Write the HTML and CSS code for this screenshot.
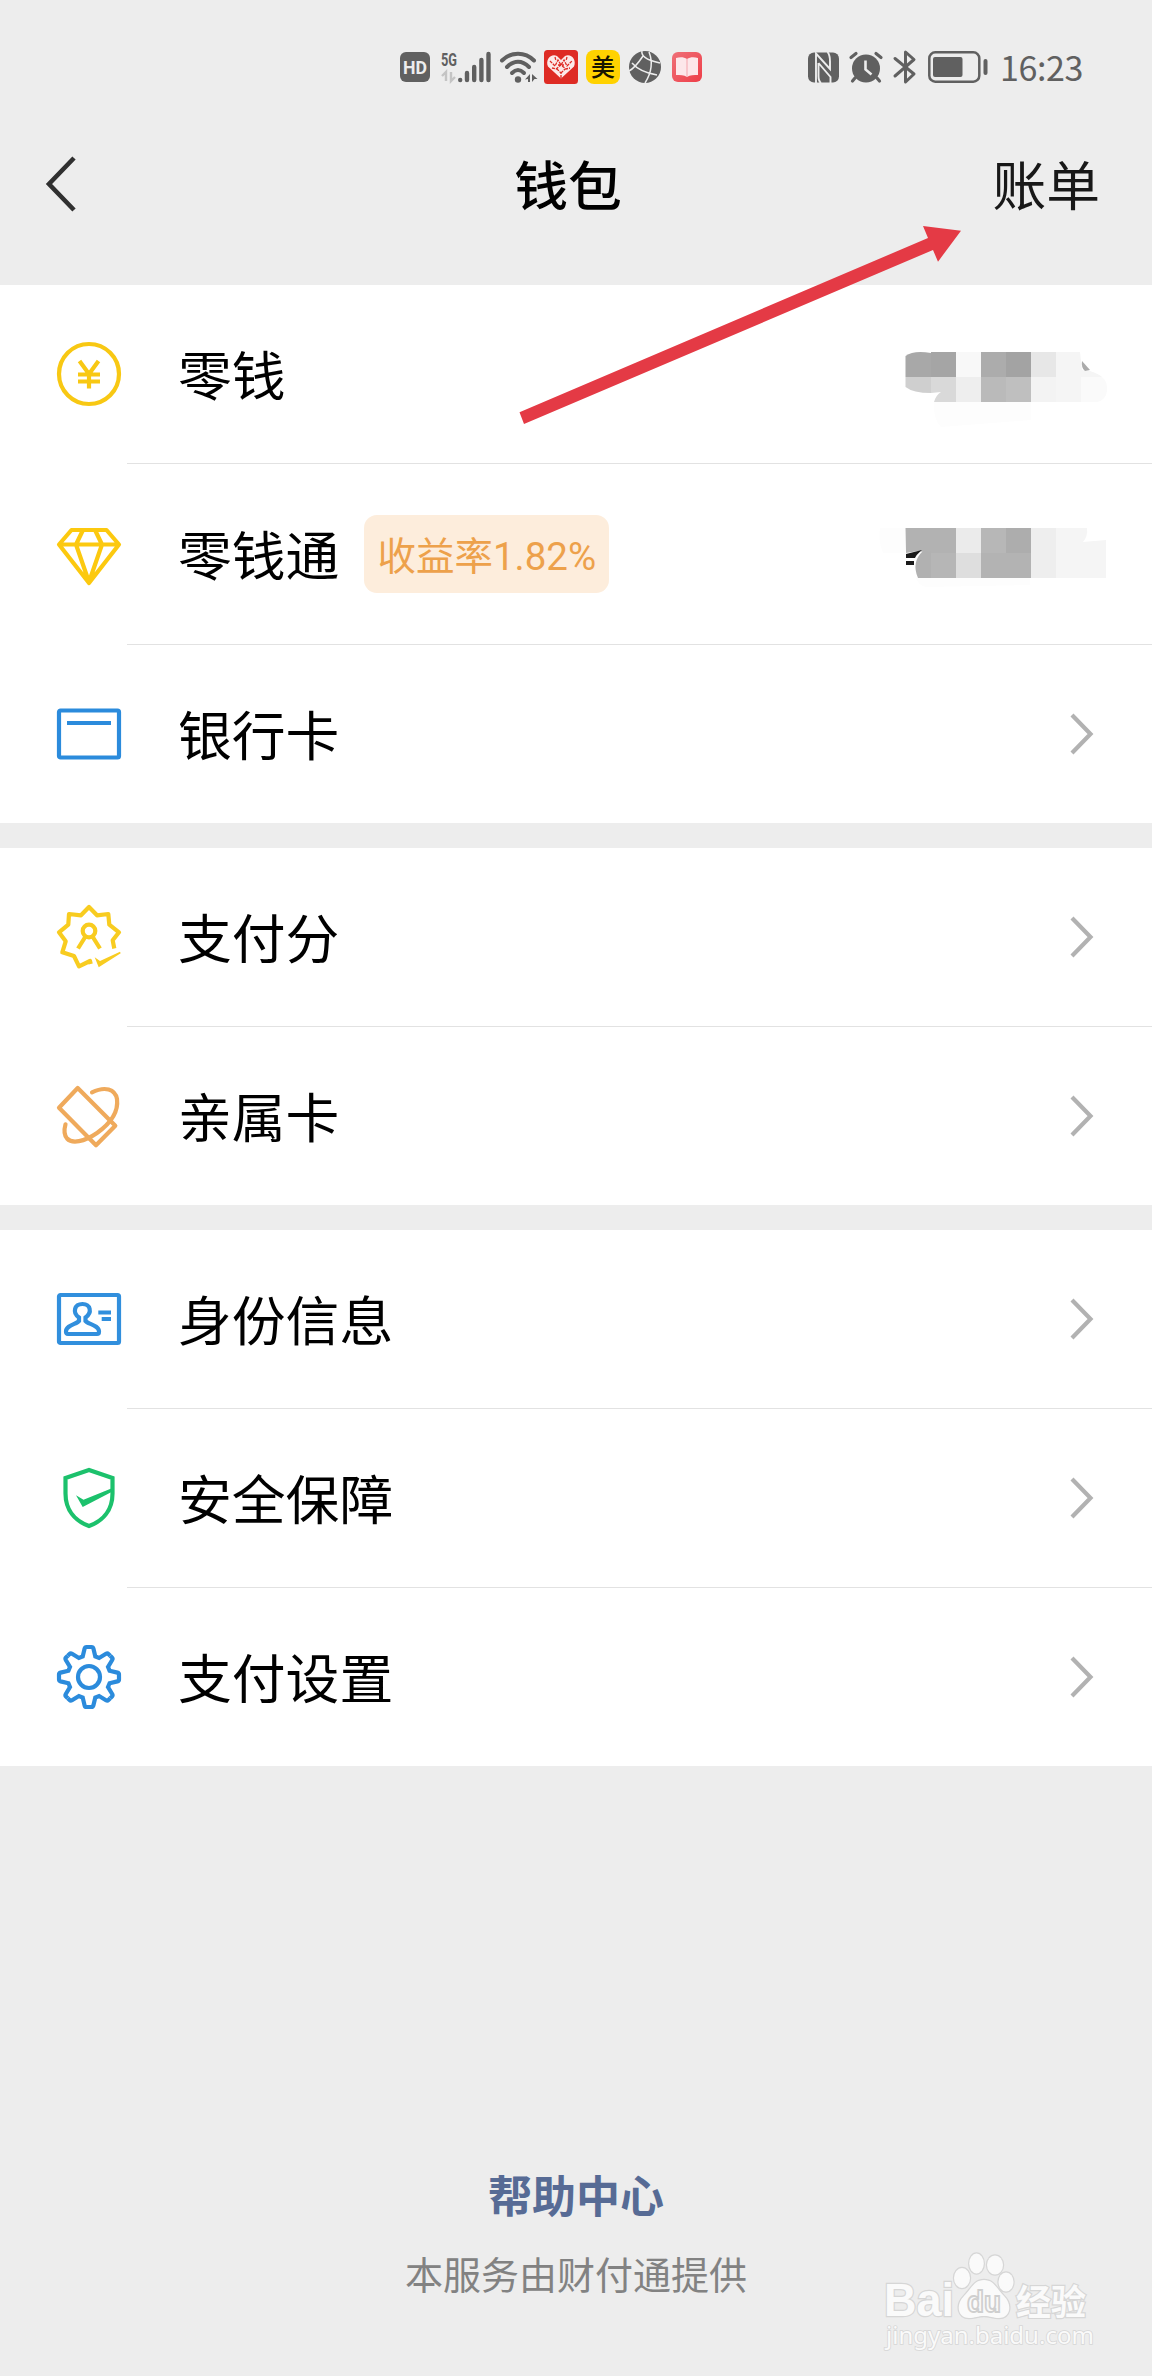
FILE: index.html
```html
<!DOCTYPE html>
<html lang="zh-CN">
<head>
    <meta charset="UTF-8">
    <meta name="viewport" content="width=device-width, initial-scale=1.0">
    <title>钱包</title>
    <link rel="stylesheet" href="styles.css">
</head>
<body>
    <div class="status-bar">
        <div class="status-left">
            <svg width="30" height="30" viewBox="0 0 30 30">
                <rect width="30" height="30" rx="6" fill="#606060"/>
                <text class="st-bold" x="3" y="22" font-size="19" textLength="24" lengthAdjust="spacingAndGlyphs" fill="#ededed">HD</text>
            </svg>
            <svg class="signal" width="50" height="32" viewBox="0 0 50 32">
                <text class="st-bold" x="0" y="14.500" font-size="18.500" textLength="16" lengthAdjust="spacingAndGlyphs" fill="#606060">5G</text>
                <path d="M5 30V21L1 25M10 21v9l4-4" fill="none" stroke="#c4c4c4" stroke-width="2.4"/>
                <path d="M19.2 29v0M26 22v7M33.2 16v13M40.4 9v20M47.5 3v26" stroke="#606060" stroke-width="4.400" stroke-linecap="round"/>
            </svg>
            <svg class="wifi" width="38" height="32" viewBox="0 0 38 32">
                <g fill="none" stroke="#606060" stroke-width="4" stroke-linecap="round">
                    <path d="M2 9.500C11 .5 25 .5 34 9.500"/>
                    <path d="M7 16C14 9 22 9 29 16"/>
                    <path d="M12 22c4-4 8-4 12 0"/>
                </g>
                <circle cx="18" cy="28.500" r="3.200" fill="#606060"/>
                <path d="M25 28.500l5-5.500v8h-2v-3zM32 31v-8l5.500 5h-3z" fill="#606060"/>
            </svg>
            <svg class="app" width="34" height="34" viewBox="0 0 34 34">
                <rect width="34" height="34" rx="3.500" fill="#de2b24"/>
                <path d="M17 28.500L4 16.500C1 10 7 3 13 6l4 4 4-4c6-3 12 4 9 10.500z" fill="#fff" fill-opacity=".9"/>
                <path d="M6 11l5 5 3-6 3 5 3-5 3 6 5-5M8 18l4 1 5-4 5 4 4-1M17 28v-5l-4-4M17 23l4-4M11 7l1 4M23 7l-1 4M14 15h6" fill="none" stroke="#de2b24" stroke-width="1.300" stroke-dasharray="3 1"/>
            </svg>
            <svg class="app" width="34" height="34" viewBox="0 0 34 34">
                <rect width="34" height="34" rx="8" fill="#ffd200"/>
                <text class="cjk-medium" x="17" y="25.500" font-size="24" text-anchor="middle" fill="#191500">美</text>
            </svg>
            <svg class="globe" width="32" height="32" viewBox="0 0 32 32">
                <circle cx="16" cy="16" r="16" fill="#606060"/>
                <path d="M13 0c-1 4 3 9 18 12M14 5C10 11 6 17 0 20M3 12c6 7 13 10 25 12M20 1c4 10 3 20-4 31" fill="none" stroke="#ededed" stroke-width="1.500"/>
            </svg>
            <svg class="book" width="30" height="30" viewBox="0 0 30 30">
                <defs>
                    <linearGradient id="bookBg" x1="0" y1="0" x2="1" y2="1">
                        <stop offset="0" stop-color="#ef7078"/>
                        <stop offset="1" stop-color="#ee3e48"/>
                    </linearGradient>
                </defs>
                <rect width="30" height="30" rx="6" fill="url(#bookBg)"/>
                <path d="M4 6c4-1 8-1 11 1 3-2 7-2 11-1v17c-4 0-8 0-11 2-3-2-7-2-11-2z" fill="#fde7ea"/>
                <path d="M15 7v18" stroke="#f4a5ad"/>
            </svg>
        </div>
        <div class="status-right">
            <svg width="31" height="31" viewBox="0 0 31 31">
                <rect width="31" height="30" y=".5" rx="6" fill="#606060"/>
                <path d="M8 31V1.500L22 17V9.500Q22 3 19.500 0M10.500 11L22.500 25v6M10.500 11V24q0 5 2.500 7" fill="none" stroke="#ededed" stroke-width="1.900"/>
            </svg>
            <svg class="alarm" width="34" height="31" viewBox="0 0 34 31">
                <circle cx="17" cy="16.500" r="14" fill="#606060"/>
                <path d="M2 5.500l5-4M32 5.500l-5-4M6 26l-2.500 3M28 26l2.500 3" stroke="#606060" stroke-width="3.200" stroke-linecap="round"/>
                <path d="M16.500 8.500v9l6 5" fill="none" stroke="#ededed" stroke-width="2.600"/>
            </svg>
            <svg class="bt" width="24" height="34" viewBox="0 0 24 34">
                <path d="M2 8.500l19 15.500-8.500 8V2L21 9.500 2 26" fill="none" stroke="#606060" stroke-width="3" stroke-linejoin="round" stroke-linecap="round"/>
            </svg>
            <svg class="battery" width="60" height="32" viewBox="0 0 60 32">
                <rect x="1.300" y="1.300" width="50" height="29.400" rx="6" fill="none" stroke="#606060" stroke-width="2.500"/>
                <rect x="5" y="6" width="29.500" height="20" rx="2" fill="#606060"/>
                <path d="M57.500 10v12" stroke="#606060" stroke-width="4" stroke-linecap="round"/>
            </svg>
            <span class="clock">16:23</span>
        </div>
    </div>

    <header class="nav">
        <svg class="back" width="32" height="56" viewBox="0 0 32 56">
            <path d="M29 2L4 28l25 26" fill="none" stroke="#303030" stroke-width="4.600"/>
        </svg>
        <h1 class="nav-title">钱包</h1>
        <a class="nav-bill">账单</a>
    </header>

    <main>
        <section class="group">
            <div class="row">
                <div class="icon-cell">
                    <svg class="icon" viewBox="0 0 64 64" stroke="#f8c813">
                        <circle cx="32" cy="32" r="30"/>
                        <path d="M22.500 19L32 32l9.500-13M32 32v14.500M21 32.500h22M21 39.500h22"/>
                    </svg>
                </div>
                <div class="row-body">
                    <span class="label">零钱</span>
                    <svg class="mosaic" width="228" height="100" viewBox="880 324 228 100">
                        <path d="M934 402h97v18l-90 7q-8-8-7-25z" fill="#fdfdfd"/>
                        <path d="M905.500 356q8-6 25.500-3v24h-25.500z" fill="#a8a8a8"/>
                        <path d="M931 352h25v25h-25z" fill="#a5a5a5"/>
                        <path d="M956 352h25v25h-25z" fill="#f8f8f8"/>
                        <path d="M981 352h25v25h-25z" fill="#acacac"/>
                        <path d="M1006 352h25v25h-25z" fill="#a3a3a3"/>
                        <path d="M1031 352h25v25h-25z" fill="#e7e7e7"/>
                        <path d="M1056 352h24l2 18 8 1q9 3 12 6h-46z" fill="#f5f5f5"/>
                        <path d="M1082 361l8 9-5 1q-4-3-3-10z" fill="#ababab"/>
                        <path d="M905.500 377H931v16q-18 0-25.500-6z" fill="#cfcfcf"/>
                        <path d="M931 377h25v25h-22q2-7 7-10l-10 1z" fill="#d9d9d9"/>
                        <path d="M956 377h25v25h-25z" fill="#eee"/>
                        <path d="M981 377h25v25h-25z" fill="#bababa"/>
                        <path d="M1006 377h25v25h-25z" fill="#bfbfbf"/>
                        <path d="M1031 377h25v25h-25z" fill="#f3f3f3"/>
                        <path d="M1056 377h25v25h-25z" fill="#f5f5f5"/>
                        <path d="M1081 377h21q6 5 5 14-1 9-10 11h-16z" fill="#fafafa"/>
                    </svg>
                </div>
            </div>
            <div class="row row-tall">
                <div class="icon-cell">
                    <svg class="icon" viewBox="0 0 64 64" stroke="#fcc90f" stroke-linejoin="round">
                        <path d="M14.500 8h35L62 22.500 32 61 2 22.500zM2 22.500h60M26 8l-7 14.500L32 60l13-37.500L38 8"/>
                    </svg>
                </div>
                <div class="row-body">
                    <span class="label">零钱通</span>
                    <span class="rate">收益率1.82%</span>
                    <svg class="mosaic" width="228" height="100" viewBox="880 504 228 100">
                        <path d="M880 528h25v25h-22q-5-12-3-25zM916 578h114v7l-104 2q-8-2-10-9z" fill="#fdfdfd"/>
                        <path d="M905.500 528H956v25h-26l-12-2-12 2z" fill="#b2b2b2"/>
                        <path d="M956 528h25v25h-25z" fill="#ebebeb"/>
                        <path d="M981 528h25v25h-25z" fill="#b7b7b7"/>
                        <path d="M1006 528h25v25h-25z" fill="#adadad"/>
                        <path d="M1031 528h25v25h-25z" fill="#eee"/>
                        <path d="M1056 528h31q1 8-4 14l23-2v13h-50z" fill="#f5f5f5"/>
                        <path d="M918 578q-7-16 5-27l8 1v26z" fill="#b1b1b1"/>
                        <path d="M931 553h25v25h-25z" fill="#b6b6b6"/>
                        <path d="M956 553h25v25h-25z" fill="#dedede"/>
                        <path d="M981 553h50v25h-50z" fill="#b3b3b3"/>
                        <path d="M1031 553h25v25h-25z" fill="#eee"/>
                        <path d="M1056 553h50v25h-50z" fill="#f5f5f5"/>
                        <path d="M906 554l16-4q-6 5-7 8h-9zM906 561h8v4h-8z" fill="#1a1a1a"/>
                    </svg>
                </div>
            </div>
            <div class="row">
                <div class="icon-cell">
                    <svg class="icon" viewBox="0 0 64 64" stroke="#2b8bdc">
                        <rect x="2" y="8.500" width="60" height="47" rx="1.500"/>
                        <path d="M10 21h44"/>
                    </svg>
                </div>
                <div class="row-body">
                    <span class="label">银行卡</span>
                    <svg class="arrow" viewBox="0 0 24 42"><path d="M2 2l18.500 19L2 40"/></svg>
                </div>
            </div>
        </section>

        <section class="group">
            <div class="row">
                <div class="icon-cell">
                    <svg class="icon" viewBox="0 0 64 64" stroke="#f8cc20">
                        <path d="M57.300 43.500l-1.600-8.200 6.300-8-9.700-7.600-1-10.700-11.300 1.300L32 2l-8 8.300L12 9l-.7 10.700L2 27.300l6.700 9-3.400 11L17 51l5 10.300L33 56l.7 3" stroke-linejoin="round"/>
                        <circle cx="32" cy="26" r="6.300"/>
                        <path d="M28.500 31.500L21 43.500M35.500 31.500L43 43.500"/>
                        <path d="M37.700 52.300L43 56l20-9.300.7 1.600-22 14z" fill="#f8cc20" stroke="none"/>
                    </svg>
                </div>
                <div class="row-body">
                    <span class="label">支付分</span>
                    <svg class="arrow" viewBox="0 0 24 42"><path d="M2 2l18.500 19L2 40"/></svg>
                </div>
            </div>
            <div class="row">
                <div class="icon-cell">
                    <svg class="icon" viewBox="0 0 64 64" stroke="#efaa5c" stroke-linejoin="round" stroke-linecap="round">
                        <path d="M20.700 4L2 23.700l37 37.600 19.300-19.600z"/>
                        <path d="M35 8.300C48 2 58 5 60 15c1.500 12-6 24-20 34-13 9-25 11-30 5.500-2.500-3-3.200-8-1.500-14.200"/>
                    </svg>
                </div>
                <div class="row-body">
                    <span class="label">亲属卡</span>
                    <svg class="arrow" viewBox="0 0 24 42"><path d="M2 2l18.500 19L2 40"/></svg>
                </div>
            </div>
        </section>

        <section class="group">
            <div class="row">
                <div class="icon-cell">
                    <svg class="icon" viewBox="0 0 64 64" stroke="#318fdd">
                        <rect x="2" y="8" width="60" height="48" rx="1.500"/>
                        <path d="M22 34v-3.500c-7-5-4.500-13.500 3.500-13.500s10 8.500 3 13.500V34c2 3 13.500 4 13.500 10.500 0 1.500-.5 2.500-2 2.500H11c-1.500 0-2-1-2-2.500C9 38 20 37 22 34z"/>
                        <path d="M41.300 25.500H54M44.700 32H54"/>
                    </svg>
                </div>
                <div class="row-body">
                    <span class="label">身份信息</span>
                    <svg class="arrow" viewBox="0 0 24 42"><path d="M2 2l18.500 19L2 40"/></svg>
                </div>
            </div>
            <div class="row">
                <div class="icon-cell">
                    <svg class="icon" viewBox="0 0 64 64" stroke="#1cc16c">
                        <path d="M32 4L8.500 12v15.500C8.500 44 18 55 32 60c14-5 23.500-16 23.500-32.500V12z"/>
                        <path d="M19 29.300l7.500 4.500L55.500 22v3.500L25.700 41z" fill="#1cc16c" stroke="none"/>
                    </svg>
                </div>
                <div class="row-body">
                    <span class="label">安全保障</span>
                    <svg class="arrow" viewBox="0 0 24 42"><path d="M2 2l18.500 19L2 40"/></svg>
                </div>
            </div>
            <div class="row">
                <div class="icon-cell">
                    <svg class="icon" viewBox="-32 -32 64 64" stroke="#2b8bdc">
                        <defs>
                            <path id="tooth" d="M0-30H2.500Q4-30 4.400-28.400L6.300-20.600 10.100-19 17-23.200Q18.400-24 19.400-23L21.200-21.200"/>
                        </defs>
                        <use href="#tooth"/>
                        <use href="#tooth" transform="rotate(45)"/>
                        <use href="#tooth" transform="rotate(90)"/>
                        <use href="#tooth" transform="rotate(135)"/>
                        <use href="#tooth" transform="rotate(180)"/>
                        <use href="#tooth" transform="rotate(225)"/>
                        <use href="#tooth" transform="rotate(270)"/>
                        <use href="#tooth" transform="rotate(315)"/>
                        <circle r="11"/>
                    </svg>
                </div>
                <div class="row-body">
                    <span class="label">支付设置</span>
                    <svg class="arrow" viewBox="0 0 24 42"><path d="M2 2l18.500 19L2 40"/></svg>
                </div>
            </div>
        </section>
    </main>

    <footer class="footer">
        <a class="help">帮助中心</a>
        <p class="provider">本服务由财付通提供</p>
    </footer>

    <!-- red pointer to the bill link -->
    <svg class="pointer" width="446" height="202" viewBox="518 224 446 202">
        <path d="M519.500 412.300L928 238l-5-12 38 4.700-23 31-5-11.700L524 424z" fill="#e43a45"/>
    </svg>

    <svg class="watermark" width="220" height="110" viewBox="0 0 220 110">
        <g fill="#fafafa" stroke="#d6d6d6" stroke-width="2.400" paint-order="stroke">
            <text class="wm-logo" x="4" y="73" font-size="46" textLength="70" lengthAdjust="spacingAndGlyphs">Bai</text>
            <ellipse cx="82" cy="35" rx="8" ry="10"/>
            <ellipse cx="96.500" cy="20.500" rx="7.300" ry="10"/>
            <ellipse cx="115" cy="22" rx="8" ry="9.500"/>
            <ellipse cx="126" cy="39" rx="7.500" ry="9.500"/>
            <path d="M104 37c10 0 13 9 20 16 9 9 6 22-5 22-6 0-9-2-15-2s-9 2-15 2c-11 0-14-13-5-22 7-7 10-16 20-16z"/>
            <text class="cjk-bold" x="136" y="71.500" font-size="35" textLength="70" lengthAdjust="spacingAndGlyphs">经验</text>
            <text class="wm-url" x="6" y="101" font-size="24" stroke-width="1.600">jingyan.baidu.com</text>
        </g>
        <text class="wm-du" x="87" y="69" font-size="29" textLength="34" lengthAdjust="spacingAndGlyphs">du</text>
    </svg>
</body>
</html>
```
FILE: styles.css
```css
* {
    box-sizing: border-box;
}
body {
    margin: 0;
    width: 1152px;
    height: 2376px;
    position: relative;
    overflow: hidden;
    background-color: #ededed;
    color: #000;
    font-family: Roboto, "Noto Sans CJK SC", sans-serif;
}
svg {
    display: block;
    flex-shrink: 0;
    overflow: visible;
}

/* status bar */
.status-bar {
    display: flex;
    justify-content: space-between;
    height: 100px;
    padding: 35px 0 0 400px;
}
.status-left,
.status-right {
    display: flex;
    align-items: center;
    height: 64px;
}
.status-right {
    width: 344px;
}
.signal {
    margin-left: 11px;
}
.wifi {
    margin-left: 9px;
}
.app {
    margin-left: 6px;
}
.app + .app {
    margin-left: 8px;
}
.globe {
    margin-left: 9px;
}
.book {
    margin-left: 11px;
}
.alarm {
    margin-left: 10px;
}
.bt {
    margin-left: 10px;
}
.battery {
    margin-left: 11px;
}
.clock {
    margin-left: 12px;
    font-family: "Noto Sans CJK SC", sans-serif;
    font-size: 34px;
    line-height: 64px;
    letter-spacing: -0.4px;
    color: #606060;
}
.st-bold {
    font-family: Roboto, sans-serif;
    font-weight: bold;
}
.cjk-medium {
    font-family: "Noto Sans CJK SC", sans-serif;
    font-weight: 500;
}
.cjk-bold {
    font-family: "Noto Sans CJK SC", sans-serif;
    font-weight: bold;
}

/* title bar */
.nav {
    display: grid;
    grid-template-columns: 1fr auto 1fr;
    align-items: center;
    height: 185px;
    padding: 0 52px 17px 45px;
}
.back {
    justify-self: start;
}
.nav-title {
    margin: 0 0 0 -9px;
    padding-top: 8px;
    font-size: 53.8px;
    font-weight: 500;
    line-height: 80px;
}
.nav-bill {
    justify-self: end;
    padding-top: 8px;
    font-size: 53.8px;
    line-height: 80px;
    color: #181818;
}

/* list */
.group {
    margin-bottom: 25px;
    background-color: #fff;
}
.row {
    display: flex;
    height: 179px;
}
.row-tall {
    height: 181px;
}
.row:last-child {
    height: 178px;
}
.icon-cell {
    display: flex;
    align-items: center;
    width: 127px;
    padding: 0 0 1px 57px;
}
.icon {
    width: 64px;
    height: 64px;
    fill: none;
    stroke-width: 4.2px;
}
.row-body {
    flex: 1;
    display: flex;
    align-items: center;
    padding: 0 44px 0 51px;
    border-bottom: 1px solid #e2e2e2;
}
.row:last-child .row-body {
    border-bottom: none;
}
.label {
    padding-top: 8px;
    font-size: 53.8px;
    line-height: 80px;
}
.rate {
    height: 78px;
    margin-left: 25px;
    padding: 1px 13px 0;
    border-radius: 13px;
    background-color: #fdeddc;
    color: #eda14b;
    font-size: 38.5px;
    line-height: 81px;
}
.mosaic {
    margin-left: auto;
}
.arrow {
    width: 24px;
    height: 42px;
    margin: 0 14px 0 auto;
    fill: none;
    stroke: #b2b2b2;
    stroke-width: 4.2px;
}

/* footer */
.footer {
    padding-top: 374px;
    text-align: center;
}
.help {
    display: block;
    font-size: 44px;
    font-weight: bold;
    line-height: 66px;
    color: #576b95;
}
.provider {
    margin: 17px 0 0;
    font-size: 38px;
    line-height: 56px;
    color: #828282;
}

/* overlays */
.pointer {
    position: absolute;
    left: 518px;
    top: 224px;
}
.watermark {
    position: absolute;
    left: 880px;
    top: 2243px;
}
.wm-logo {
    font-family: "Liberation Sans", Arial, sans-serif;
    font-weight: bold;
}
.wm-url {
    font-family: "Noto Sans", sans-serif;
}
.wm-du {
    font-family: "Liberation Sans", Arial, sans-serif;
    font-weight: bold;
    fill: #fafafa;
    stroke: #cfcfcf;
    stroke-width: 1.8px;
}
```
